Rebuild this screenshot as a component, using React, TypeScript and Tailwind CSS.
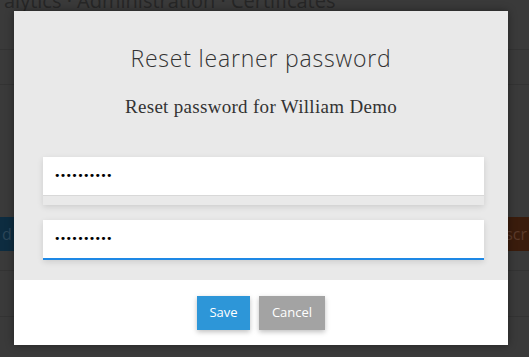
import React from 'react'

const BackgroundPage: React.FC = () => (
  <div className="h-[357px] w-[529px] overflow-hidden bg-[#3a3a3a] font-['Open_Sans',sans-serif]">
    <div className="-mt-[14px] h-[64px] border-b border-[#333] px-[4px] text-[20px] text-[#262626]">
      alytics · Administration · Certificates
    </div>
    <div className="h-[35px] border-b border-[#333]" />
    <div className="h-[132px]" />
    <div className="flex h-[34px] items-center justify-between">
      <div className="flex h-full w-[60px] items-center bg-[#0d2c40] pl-[2px] text-[16px] text-[#2c4658]">d I</div>
      <div className="flex h-full w-[60px] items-center justify-end bg-[#3a1c0c] pr-[2px] text-[16px] text-[#5a3a2a]">scr</div>
    </div>
    <div className="h-[20px] border-b border-[#333]" />
    <div className="h-[46px] border-b border-[#333]" />
  </div>
)

const App = () => {
  return (
    <div className="relative h-[357px] w-[529px] overflow-hidden">
      <BackgroundPage />
      <div className="absolute left-[14px] top-[11px] flex w-[494px] flex-col shadow-[0_0_8px_rgba(0,0,0,0.4)]">
        <div className="flex flex-col bg-[#e9e9e9] pb-[20px] pt-[30px]">
          <div className="flex flex-col items-center">
            <h2 className="text-[23px] font-light tracking-[0.8px] leading-[34px] text-[#333] font-['Open_Sans',sans-serif]">
              Reset learner password
            </h2>
            <p className="mt-[20px] text-[19px] tracking-[0.3px] leading-[24px] text-[#333] font-['Liberation_Serif',serif]">
              Reset password for William Demo
            </p>
          </div>
          <div className="flex flex-col pl-[29px] pr-[24px]">
            <div className="mt-[38px] w-full bg-[#e9e9e9] shadow-[0_2px_6px_rgba(0,0,0,0.12)]">
              <div className="flex h-[39px] items-center border-b border-[#d8d8d8] bg-white pl-[11px] text-[11px] tracking-[-0.7px] text-black font-['DejaVu_Sans',sans-serif]">
                ••••••••••
              </div>
              <div className="h-[9px]" />
            </div>
            <div className="mt-[15px] flex h-[40px] w-full items-center border-b-2 border-[#1e88e5] bg-white pl-[11px] text-[11px] tracking-[-0.7px] text-black shadow-[0_2px_6px_rgba(0,0,0,0.12)] font-['DejaVu_Sans',sans-serif]">
              ••••••••••
            </div>
          </div>
        </div>
        <div className="flex h-[65px] items-start justify-center gap-[9px] bg-white pt-[16px] font-['Open_Sans',sans-serif]">
          <button className="h-[34px] w-[53px] bg-[#2d96d8] text-[13px] text-white shadow-[0_2px_5px_rgba(0,0,0,0.25)]">
            Save
          </button>
          <button className="h-[34px] w-[66px] bg-[#a3a3a3] text-[13px] text-white shadow-[0_2px_5px_rgba(0,0,0,0.25)]">
            Cancel
          </button>
        </div>
      </div>
    </div>
  )
}

export default App
